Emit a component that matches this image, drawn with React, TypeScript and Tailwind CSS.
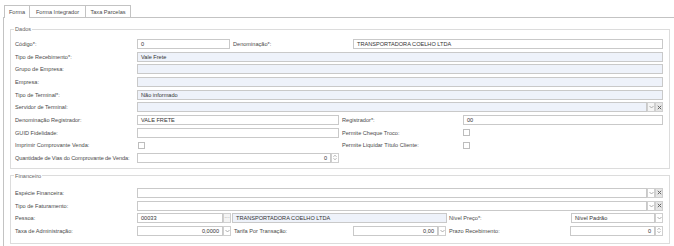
import clsx from "clsx";

const Drop = ({ light }: { light?: boolean }) => (
    <div className={clsx("w-[8px] h-full shrink-0 border border-[#cfcfcf] flex items-center justify-center", light ? "bg-[#f4f4f4]" : "bg-white")}>
        <svg width="5" height="4" viewBox="0 0 5 4">
            <path d="M0.5 1 L2.5 3 L4.5 1" fill="none" stroke="#999" strokeWidth="0.8" />
        </svg>
    </div>
);

const Clear = () => (
    <div className="w-[8px] h-full shrink-0 border border-[#cfcfcf] bg-[#e6e6e6] flex items-center justify-center">
        <svg width="5" height="5" viewBox="0 0 5 5">
            <path d="M0.8 0.8 L4.2 4.2 M4.2 0.8 L0.8 4.2" fill="none" stroke="#666" strokeWidth="1" />
        </svg>
    </div>
);

const Spin = () => (
    <div className="w-[8px] h-full shrink-0 border border-[#cfcfcf] bg-white flex flex-col items-center justify-center gap-[1px]">
        <svg width="4" height="2" viewBox="0 0 4 2">
            <path d="M0.3 1.8 L2 0.3 L3.7 1.8" fill="none" stroke="#999" strokeWidth="0.7" />
        </svg>
        <svg width="4" height="2" viewBox="0 0 4 2">
            <path d="M0.3 0.2 L2 1.7 L3.7 0.2" fill="none" stroke="#999" strokeWidth="0.7" />
        </svg>
    </div>
);

const Field = ({ className, blue, right, children }: { className?: string; blue?: boolean; right?: boolean; children?: React.ReactNode }) => (
    <div
        className={clsx(
            "h-full border border-[#c9c9c9] flex items-center px-[3px] whitespace-nowrap overflow-hidden text-[#333]",
            blue ? "bg-[#eef2fa]" : "bg-white",
            right && "justify-end",
            className
        )}
    >
        {children}
    </div>
);

const Check = () => <div className="w-[7px] h-[7px] border border-[#bdbdbd] bg-white" />;

const Label = ({ className, children }: { className?: string; children: React.ReactNode }) => (
    <span className={clsx("shrink-0 whitespace-nowrap", className)}>{children}</span>
);

const Row = ({ children }: { children: React.ReactNode }) => <div className="flex items-center h-[10px]">{children}</div>;

export default function App() {
    return (
        <div className="w-[674px] h-[246px] overflow-hidden bg-white text-[#4a4a4a] text-[5.6px] leading-[8px] font-['Liberation_Sans',Arial,sans-serif]">
            {/* tabs */}
            <div className="flex items-end pl-[4px] pt-[5px]">
                <div className="relative z-10 w-[26px] h-[13px] -mb-px border border-b-0 border-[#c3c3c3] bg-white flex items-center justify-center">Forma</div>
                <div className="w-[57px] h-[12px] -ml-px border border-b-0 border-[#c3c3c3] bg-white flex items-center justify-center">Forma Integrador</div>
                <div className="w-[46px] h-[12px] -ml-px border border-b-0 border-[#c3c3c3] bg-white flex items-center justify-center">Taxa Parcelas</div>
            </div>

            <div className="ml-[3px] w-[674px] h-[240px] border border-[#c3c3c3] px-[6px]">
                {/* Dados */}
                <fieldset className="mt-[7px] border border-[#dcdcdc] pl-[4px] pr-[6px] pt-[6px] pb-[5px]">
                    <legend className="-ml-[1px] px-[1px] text-[#666]">Dados</legend>
                    <div className="flex flex-col gap-[2.67px]">
                        <Row>
                            <Label className="w-[122px]">Código*:</Label>
                            <Field className="w-[93px]">0</Field>
                            <Label className="w-[123px] pl-[3px]">Denominação*:</Label>
                            <Field className="flex-1">TRANSPORTADORA COELHO LTDA</Field>
                        </Row>
                        <Row>
                            <Label className="w-[122px]">Tipo de Recebimento*:</Label>
                            <Field className="flex-1" blue>Vale Frete</Field>
                        </Row>
                        <Row>
                            <Label className="w-[122px]">Grupo de Empresa:</Label>
                            <Field className="flex-1" blue />
                        </Row>
                        <Row>
                            <Label className="w-[122px]">Empresa:</Label>
                            <Field className="flex-1" blue />
                        </Row>
                        <Row>
                            <Label className="w-[122px]">Tipo de Terminal*:</Label>
                            <Field className="flex-1" blue>Não informado</Field>
                        </Row>
                        <Row>
                            <Label className="w-[122px]">Servidor de Terminal:</Label>
                            <Field className="flex-1" blue />
                            <Drop light />
                            <Clear />
                        </Row>
                        <Row>
                            <Label className="w-[122px]">Denominação Registrador:</Label>
                            <Field className="w-[202px]">VALE FRETE</Field>
                            <Label className="w-[124px] pl-[3px]">Registrador*:</Label>
                            <Field className="flex-1">00</Field>
                        </Row>
                        <Row>
                            <Label className="w-[122px]">GUID Fidelidade:</Label>
                            <Field className="w-[202px]" />
                            <Label className="w-[124px] pl-[3px]">Permite Cheque Troco:</Label>
                            <Check />
                        </Row>
                        <Row>
                            <Label className="w-[122px]">Imprimir Comprovante Venda:</Label>
                            <div className="w-[202px] pl-[1px]">
                                <Check />
                            </div>
                            <Label className="w-[124px] pl-[3px]">Permite Liquidar Título Cliente:</Label>
                            <Check />
                        </Row>
                        <Row>
                            <Label className="w-[122px] tracking-[-0.1px]">Quantidade de Vias do Comprovante de Venda:</Label>
                            <Field className="w-[194px]" right>0</Field>
                            <Spin />
                        </Row>
                    </div>
                </fieldset>

                {/* Financeiro */}
                <fieldset className="mt-[3px] border border-[#dcdcdc] pl-[4px] pr-[6px] pt-[8px] pb-[7px]">
                    <legend className="-ml-[1px] px-[1px] text-[#666]">Financeiro</legend>
                    <div className="flex flex-col gap-[2.6px]">
                        <Row>
                            <Label className="w-[122px]">Espécie Financeira:</Label>
                            <Field className="flex-1" />
                            <Drop />
                            <Clear />
                        </Row>
                        <Row>
                            <Label className="w-[122px]">Tipo de Faturamento:</Label>
                            <Field className="flex-1" />
                            <Drop />
                            <Clear />
                        </Row>
                        <Row>
                            <Label className="w-[122px]">Pessoa:</Label>
                            <Field className="w-[86px]">00033</Field>
                            <div className="w-[8px] h-full shrink-0 border border-[#cfcfcf] bg-[#f4f4f4] flex items-center justify-center text-[#777] leading-none">···</div>
                            <Field className="w-[215px] ml-[1px]" blue>TRANSPORTADORA COELHO LTDA</Field>
                            <Label className="w-[124px] pl-[2px]">Nível Preço*:</Label>
                            <Field className="flex-1">Nível Padrão</Field>
                            <Drop />
                        </Row>
                        <Row>
                            <Label className="w-[122px]">Taxa de Administração:</Label>
                            <Field className="w-[86px]" right>0,0000</Field>
                            <Drop />
                            <Label className="w-[122px] pl-[3px]">Tarifa Por Transação:</Label>
                            <Field className="w-[85px]" right>0,00</Field>
                            <Drop />
                            <Label className="w-[124px] pl-[3px]">Prazo Recebimento:</Label>
                            <Field className="flex-1" right>0</Field>
                            <Spin />
                        </Row>
                    </div>
                </fieldset>
            </div>
        </div>
    );
}
